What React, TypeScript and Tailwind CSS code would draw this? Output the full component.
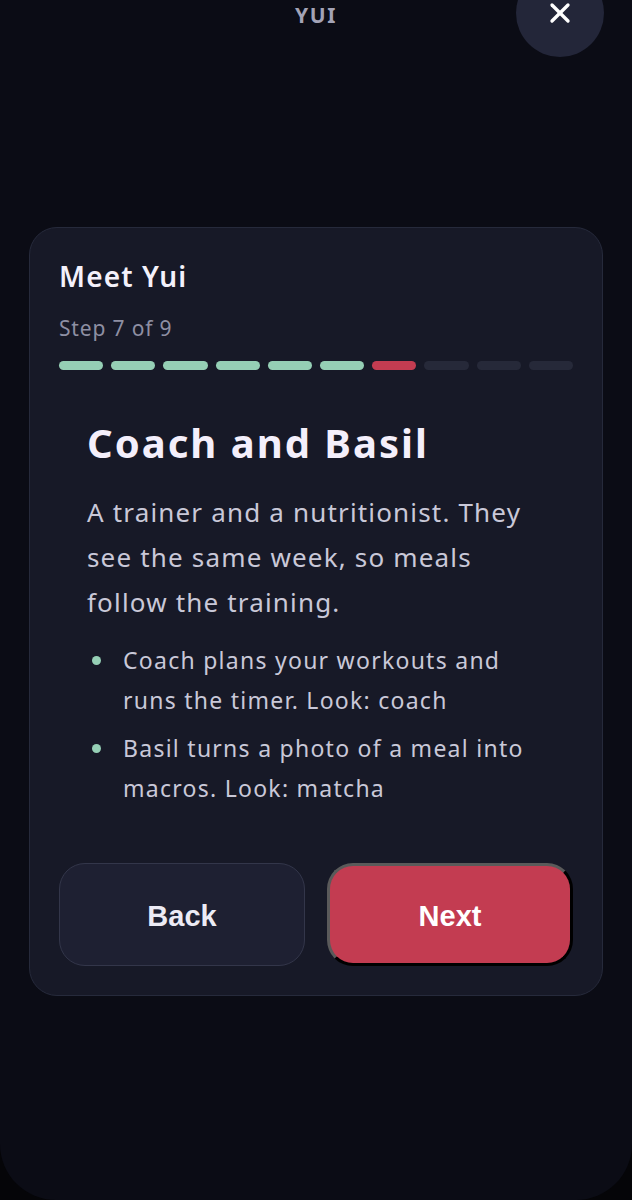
import { X } from "lucide-react";

const segments = 10;
const current = 7;

const bullets = [
  "Coach plans your workouts and runs the timer. Look: coach",
  "Basil turns a photo of a meal into macros. Look: matcha",
];

export default function App() {
  return (
    <div className="min-h-[1200px] bg-[#050508]">
      <div className="relative h-[1200px] overflow-hidden rounded-b-[56px] bg-[#0b0c15] font-['Noto_Sans',sans-serif]">
        <header className="flex justify-center">
          <span className="text-[21px] font-bold tracking-[0.08em] text-[#a3a3b6]">YUI</span>
        </header>
        <button
          type="button"
          aria-label="Close"
          className="absolute left-[516px] top-[-31px] flex h-[88px] w-[88px] items-center justify-center rounded-full bg-[#232639] text-white"
        >
          <X size={32} strokeWidth={2.5} />
        </button>

        <section className="mx-[29px] mt-[195px] rounded-[28px] border border-[#262a3b] bg-[#171927] px-[29px] pb-[29px] pt-[28px]">
          <h2 className="text-[28px] font-semibold leading-[40px] tracking-[0.04em] text-[#f4f1fb]">Meet Yui</h2>
          <p className="mt-[18px] text-[21px] leading-[28px] tracking-[0.04em] text-[#8e8fa3]">Step 7 of 9</p>
          <div className="mt-[19px] flex gap-2">
            {Array.from({ length: segments }, (_, i) => (
              <div
                key={i}
                className={
                  "h-[9px] flex-1 rounded-full " +
                  (i < current - 1 ? "bg-[#95cfb5]" : i === current - 1 ? "bg-[#c43c51]" : "bg-[#262939]")
                }
              />
            ))}
          </div>

          <div className="px-[28px] pt-[49px]">
            <h1 className="text-[40px] font-bold leading-[48px] tracking-[0.05em] text-[#f4effb]">Coach and Basil</h1>
            <p className="mt-[23px] text-[26px] leading-[45px] tracking-[0.045em] text-[#c9c8d8]">
              A trainer and a nutritionist. They see the same week, so meals follow the training.
            </p>
            <ul className="mt-[15px] flex flex-col gap-[8px]">
              {bullets.map((b) => (
                <li key={b} className="flex text-[23px] leading-[40px] tracking-[0.055em] text-[#c9c8d8]">
                  <span className="mt-[16px] ml-[5px] mr-[22px] h-[9px] w-[9px] shrink-0 rounded-full bg-[#95cfb5]" />
                  <span>{b}</span>
                </li>
              ))}
            </ul>
          </div>

          <div className="mt-[55px] grid grid-cols-2 gap-[22px]">
            <button
              type="button"
              className="h-[103px] rounded-[26px] border border-[#33364a] bg-[#1e2032] pt-[5px] font-['Liberation_Sans',sans-serif] text-[29px] font-bold text-[#ecebf5]"
            >
              Back
            </button>
            <button
              type="button"
              className="h-[103px] rounded-[26px] border-[3px] border-solid border-t-[#5a5a5a] border-l-[#5a5a5a] border-r-black border-b-black bg-[#c33c51] pt-[5px] font-['Liberation_Sans',sans-serif] text-[29px] font-bold text-white"
            >
              Next
            </button>
          </div>
        </section>
      </div>
    </div>
  );
}
